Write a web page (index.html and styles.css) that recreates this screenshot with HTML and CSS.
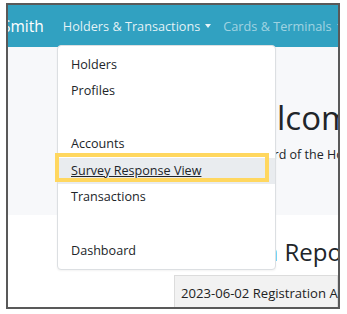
FILE: index.html
```html
<!doctype html>
<html lang="en">
  <head>
    <meta charset="UTF-8" />
    <meta name="viewport" content="width=device-width, initial-scale=1.0" />
    <title>Survey Response View</title>
    <link rel="stylesheet" href="styles.css">
  </head>
  <body>
    <div class="frame">
      <nav class="navbar">
        <span class="brand">Smith</span>
        <ul class="nav-links">
          <li class="nav-item open">Holders &amp; Transactions<span class="caret"></span></li>
          <li class="nav-item">Cards &amp; Terminals<span class="caret"></span></li>
        </ul>
      </nav>

      <div class="jumbotron">
        <h1>Welcome</h1>
        <p class="lead">The Dashboard of the Holders portal.</p>
      </div>

      <section class="reports">
        <h2><span class="accent">Registration</span> Reports</h2>
        <div class="report-card">2023-06-02 Registration Audit</div>
      </section>

      <!-- open dropdown of the Holders & Transactions menu -->
      <ul class="dropdown-menu">
        <li class="dropdown-item">Holders</li>
        <li class="dropdown-item">Profiles</li>
        <li class="dropdown-item empty"></li>
        <li class="dropdown-item">Accounts</li>
        <li class="dropdown-item hover">Survey Response View</li>
        <li class="dropdown-item">Transactions</li>
        <li class="dropdown-item empty"></li>
        <li class="dropdown-item">Dashboard</li>
      </ul>

      <!-- annotation box -->
      <div class="highlight-box"></div>
    </div>
  </body>
</html>
```

FILE: styles.css
```css
* {
  margin: 0;
  padding: 0;
  box-sizing: border-box;
}

body {
  font-family: "Open Sans", "Noto Sans", sans-serif;
  background: #fff;
  padding: 3px 0 0 6px;
  color: #212529;
}

.frame {
  position: relative;
  width: 334px;
  height: 306px;
  border: 2px solid #595959;
  overflow: hidden;
  background: #fff;
}

/* Top navigation */
.navbar {
  display: flex;
  align-items: center;
  height: 42px;
  background: #31a1c1;
  white-space: nowrap;
}

.brand {
  font-size: 15.5px;
  color: #fff;
  margin-left: -6px;
}

.nav-links {
  display: flex;
  list-style: none;
  gap: 12px;
  margin-left: 19px;
}

.nav-item {
  font-size: 12.7px;
  color: rgba(255, 255, 255, 0.55);
}

.nav-item.open {
  color: rgba(255, 255, 255, 0.88);
}

.caret {
  display: inline-block;
  margin-left: 5px;
  vertical-align: 3px;
  border-top: 4px solid;
  border-left: 3px solid transparent;
  border-right: 3px solid transparent;
}

/* Welcome block */
.jumbotron {
  height: 168px;
  background: #f7f8fa;
  padding: 51px 0 0 220px;
  white-space: nowrap;
}

.jumbotron h1 {
  font-size: 33px;
  font-weight: 400;
  line-height: 40px;
}

.lead {
  font-size: 12.5px;
  margin-top: 8px;
  margin-left: -31px;
}

/* Reports */
.reports {
  padding: 22px 0 0 166px;
  white-space: nowrap;
}

.reports h2 {
  font-size: 24px;
  font-weight: 400;
  line-height: 30px;
  margin-left: -30px;
}

.accent {
  color: #2b7fd0;
}

.report-card {
  margin-top: 8px;
  background: #f2f2f2;
  border: 1px solid #dcdcdc;
  padding: 8px 6px;
  font-size: 13.1px;
  color: #222;
}

/* Dropdown menu */
.dropdown-menu {
  position: absolute;
  left: 49px;
  top: 40px;
  width: 219px;
  height: 225px;
  list-style: none;
  background: #fff;
  border: 1px solid #dcdfe2;
  border-radius: 4px;
  padding: 5.5px 0;
  box-shadow: 0 1px 2px rgba(0, 0, 0, 0.05);
}

.dropdown-item {
  height: 26.6px;
  line-height: 26.6px;
  padding-left: 13px;
  font-size: 12.6px;
  color: #212529;
}

.dropdown-item.hover {
  background: #e9ecef;
  text-decoration: underline;
}

.highlight-box {
  position: absolute;
  left: 47px;
  top: 148px;
  width: 214px;
  height: 29px;
  border: 4px solid #ffd75f;
}
```
